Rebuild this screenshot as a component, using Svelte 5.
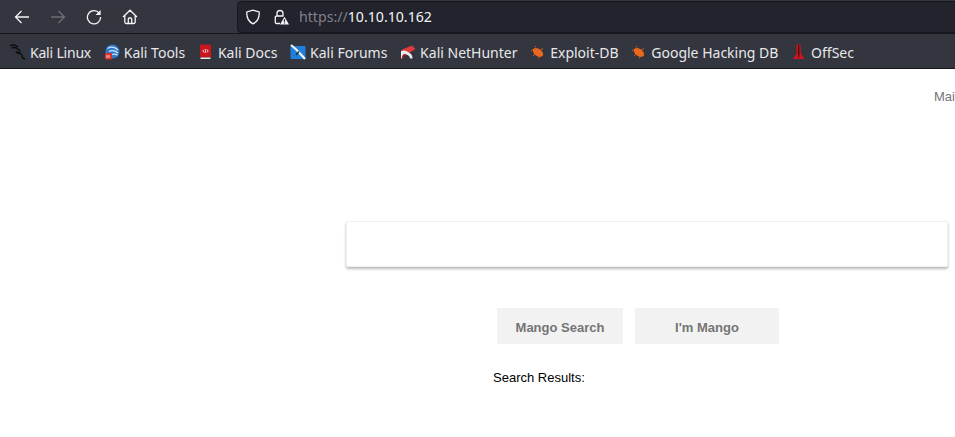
<script>
	const bookmarks = [
		{ label: 'Kali Linux', icon: 'dragon' },
		{ label: 'Kali Tools', icon: 'tools' },
		{ label: 'Kali Docs', icon: 'docs' },
		{ label: 'Kali Forums', icon: 'forums' },
		{ label: 'Kali NetHunter', icon: 'nethunter' },
		{ label: 'Exploit-DB', icon: 'bug' },
		{ label: 'Google Hacking DB', icon: 'bug' },
		{ label: 'OffSec', icon: 'offsec' }
	];
</script>

<div class="browser">
	<div class="toolbar">
		<div class="nav">
			<svg class="nav-icon" viewBox="0 0 16 16">
				<path d="M15 8H1.5M7.5 2 1.5 8l6 6" />
			</svg>
			<svg class="nav-icon disabled" viewBox="0 0 16 16">
				<path d="M1 8h13.5M8.5 2l6 6-6 6" />
			</svg>
			<svg class="nav-icon" viewBox="0 0 16 16">
				<path d="M13.2 4.2A6.6 6.6 0 1 0 14.6 8" />
				<path class="solid" d="M14.6 1v5h-5z" />
			</svg>
			<svg class="nav-icon" viewBox="0 0 16 16">
				<path d="M1 8 8 1.2 15 8M2.8 6.6V13a1.5 1.5 0 0 0 1.5 1.5h7.4a1.5 1.5 0 0 0 1.5-1.5V6.6M6.3 14.5V10a1 1 0 0 1 1-1h1.4a1 1 0 0 1 1 1v4.5" />
			</svg>
		</div>
		<div class="urlbar">
			<svg class="nav-icon shield" viewBox="0 0 16 16">
				<path d="M8 1.2 14.2 3c.3 5.5-1.500 9.600-6.200 11.800C3.300 12.600 1.500 8.500 1.800 3z" />
			</svg>
			<svg class="lock" viewBox="0 0 16 16">
				<path class="line" d="M4 7V4.500a3 3 0 0 1 6 0V7M7 14.500H3.500a1.200 1.200 0 0 1-1.200-1.200V8.200A1.200 1.200 0 0 1 3.500 7h7" />
				<path class="warn" d="M11.500 7.800 16 15.500H7z" />
				<path class="warn-mark" d="M11.500 10.200v2.600M11.500 13.500v1" />
			</svg>
			<span class="url"><span class="scheme">https://</span>10.10.10.162</span>
		</div>
	</div>

	<div class="bookmarks">
		{#each bookmarks as b}
			<div class="bookmark">
				<svg class="favicon" viewBox="0 0 16 16">
					{#if b.icon === 'dragon'}
						<path class="dragon" d="M0 1.500c2.500-.8 6-.3 8 1.500M1.500 4c2-.8 4.500-.5 6.500 1 1.500 1 2 2.500 1.500 3.500-1 .3-3 0-3.500-1.300M6 7.500c.5 2 3.500 1.500 5 2.500 1.500 1 1 3 1.500 3.500.5.7 1.500 1 2.500 1.500" />
					{:else if b.icon === 'tools'}
						<circle cx="8.500" cy="7.500" r="7" fill="#2b7ad0" />
						<path d="M3.500 4.500c3.500-2 7.500-1.500 10.500 1.500M5 7.500c3-1.500 6-1 9 1.500M8 10.500c2-.8 4-.5 5.500.8" fill="none" stroke="#d5e6f8" stroke-width="1.200" />
						<rect x="1" y="9" width="7" height="6.500" rx="1" fill="#d8322c" />
						<path d="M3 14v-3M5 14v-3" stroke="#fff" stroke-width="0.800" />
					{:else if b.icon === 'docs'}
						<rect x="2" y="0.500" width="11" height="13" rx="1" fill="#c8161c" />
						<rect x="2.500" y="13.500" width="10" height="1.500" fill="#e9e9e9" />
						<path d="M6 5.500 4.800 7 6 8.500M9 5.500 10.200 7 9 8.500M8 5 7 9" fill="none" stroke="#fff" stroke-width="0.800" />
					{:else if b.icon === 'forums'}
						<rect x="0.500" y="2" width="15" height="13" rx="1" fill="#1f80dc" />
						<path d="M1 1c3 2.500 6 5 8 7.500 2 2 4 4 6 6.500" fill="none" stroke="#f4f4f4" stroke-width="2.200" />
						<path d="M9 7.500 6 11" fill="none" stroke="#26303c" stroke-width="1.500" />
					{:else if b.icon === 'nethunter'}
						<path d="M1 6 12 1.500 15.500 5 9 9z" fill="#e23a3a" />
						<path d="M1 7c3-1.500 7 .5 10 3 1 1 1.500 3 1.500 4.500h-2.500c0-3-4-5-6.500-3.500-1 .6-1 2-1 3.500H1z" fill="#ececec" />
						<path d="M2.500 15c0-3 1-4.500 3-4.500" fill="none" stroke="#b31f1f" stroke-width="1.400" />
					{:else if b.icon === 'bug'}
						<ellipse cx="8" cy="8.500" rx="5.800" ry="3.600" transform="rotate(35 8 8.500)" fill="#e8681f" />
						<path d="M3.500 5 1 7M6 3.500 5 2M10 6l3-1.500M5 10l-2 2M9 12l-.5 2.500" fill="none" stroke="#c9591f" stroke-width="1" />
					{:else}
						<path d="M5.500 0.500h4l.5 9 3.500 5.500H2l3.500-5.500z" fill="#c8171d" />
						<path d="M7 1h1.400l.2 9-.9 5-.9-5z" fill="#5c0b0f" />
					{/if}
				</svg>
				<span>{b.label}</span>
			</div>
		{/each}
	</div>

	<main class="page">
		<a class="main-link" href="#main">Main</a>
		<div class="searchbox"></div>
		<div class="actions">
			<button>Mango Search</button>
			<button class="wide">I'm Mango</button>
		</div>
		<p class="results">Search Results:</p>
	</main>
</div>

<style>
	:global(body) {
		background: #fff;
		overflow: hidden;
	}

	.browser {
		width: 955px;
		height: 437px;
		overflow: hidden;
		display: flex;
		flex-direction: column;
	}

	.toolbar {
		height: 33px;
		background: #33353f;
		display: flex;
		align-items: center;
		flex: none;
	}

	.nav {
		width: 237px;
		flex: none;
		display: flex;
		gap: 20px;
		padding-left: 14px;
		box-sizing: border-box;
	}

	.nav-icon {
		width: 16px;
		height: 16px;
		fill: none;
		stroke: #f4f4f6;
		stroke-width: 1.300;
		flex: none;
	}

	.nav-icon.disabled {
		stroke: #6d6e76;
	}

	.nav-icon .solid {
		fill: #f4f4f6;
		stroke: none;
	}

	.urlbar {
		flex: 1;
		height: 32px;
		box-sizing: border-box;
		margin-right: -8px;
		background: #22232c;
		border: 1px solid #17181e;
		border-radius: 4px;
		display: flex;
		align-items: center;
		padding-left: 7px;
	}

	.shield {
		margin-right: 12px;
	}

	.lock {
		width: 16px;
		height: 16px;
		flex: none;
		margin-right: 10px;
	}

	.lock .line {
		fill: none;
		stroke: #f4f4f6;
		stroke-width: 1.300;
	}

	.lock .warn {
		fill: #f4f4f6;
	}

	.lock .warn-mark {
		stroke: #22232c;
		stroke-width: 1.200;
	}

	.url {
		font: 14.150px "Noto Sans", sans-serif;
		color: #f4f4f6;
	}

	.scheme {
		color: #80818a;
	}

	.bookmarks {
		height: 36px;
		box-sizing: border-box;
		flex: none;
		background: #33353f;
		border-top: 1px solid #15161b;
		border-bottom: 1px solid #15161b;
		display: flex;
		align-items: center;
		gap: 12.700px;
		padding: 2px 0 0 10px;
	}

	.bookmark {
		display: flex;
		align-items: center;
		gap: 4px;
		font: 14px "Noto Sans", sans-serif;
		color: #e8e8ea;
		white-space: nowrap;
	}

	.bookmark:first-child {
		letter-spacing: -0.2px;
	}

	.favicon {
		width: 16px;
		height: 16px;
		flex: none;
	}

	.dragon {
		fill: none;
		stroke: #0c0c0e;
		stroke-width: 1.400;
	}

	.page {
		flex: 1;
		background: #fff;
		font-family: "Liberation Sans", sans-serif;
		padding: 20px 0 0 346px;
	}

	.main-link {
		display: block;
		margin-left: 588px;
		font-size: 13px;
		line-height: 15px;
		color: #757575;
		text-decoration: none;
		white-space: nowrap;
	}

	.searchbox {
		width: 602px;
		height: 46px;
		margin-top: 117px;
		box-sizing: border-box;
		background: #fff;
		border: 1px solid #f0f0f0;
		border-radius: 2px;
		box-shadow: 0 2px 3px rgba(0, 0, 0, 0.28);
	}

	.actions {
		display: flex;
		gap: 12px;
		margin: 41px 0 0 151px;
	}

	button {
		width: 126px;
		height: 36px;
		border: 0;
		padding: 2px 0 0;
		background: #f2f2f2;
		color: #757575;
		font: bold 13px "Liberation Sans", sans-serif;
		border-radius: 0;
	}

	button.wide {
		width: 144px;
	}

	.results {
		margin: 26px 0 0 147px;
		font-size: 13px;
		line-height: 15px;
		color: #000;
	}
</style>
